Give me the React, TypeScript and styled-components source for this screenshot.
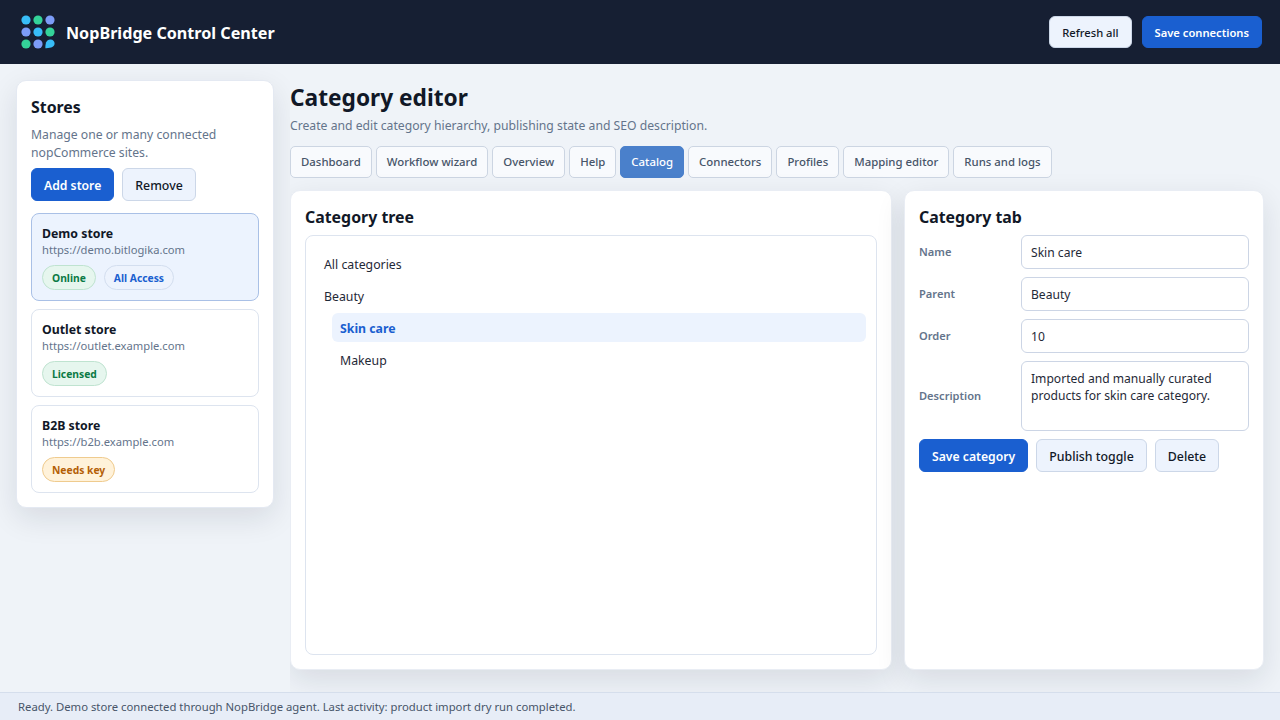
import React from 'react'
import styled, { createGlobalStyle, css } from 'styled-components'

const GlobalStyle = createGlobalStyle`
  html, body, #root {
    height: 100%;
    margin: 0;
  }
  body {
    font-family: 'Noto Sans', 'Liberation Sans', sans-serif;
    color: #111827;
    background: #eff3f8;
  }
  * {
    box-sizing: border-box;
  }
`

const tabs = ['Dashboard', 'Workflow wizard', 'Overview', 'Help', 'Catalog', 'Connectors', 'Profiles', 'Mapping editor', 'Runs and logs']

type Tone = 'green' | 'blue' | 'mint' | 'amber'

const stores: { name: string; url: string; active?: boolean; badges: { text: string; tone: Tone }[] }[] = [
  {
    name: 'Demo store',
    url: 'https://demo.bitlogika.com',
    active: true,
    badges: [
      { text: 'Online', tone: 'green' },
      { text: 'All Access', tone: 'blue' },
    ],
  },
  { name: 'Outlet store', url: 'https://outlet.example.com', badges: [{ text: 'Licensed', tone: 'mint' }] },
  { name: 'B2B store', url: 'https://b2b.example.com', badges: [{ text: 'Needs key', tone: 'amber' }] },
]

const Logo = () => (
  <svg width="34" height="34" viewBox="0 0 34 34">
    <circle cx="5" cy="5" r="4.6" fill="#38bdf8" />
    <circle cx="17" cy="5" r="4.6" fill="#34d399" />
    <circle cx="29" cy="5" r="4.6" fill="#7c9cf8" />
    <circle cx="5" cy="17" r="4.6" fill="#7c9cf8" />
    <circle cx="17" cy="17" r="4.6" fill="#38bdf8" />
    <circle cx="29" cy="17" r="4.6" fill="#34d399" />
    <circle cx="5" cy="29" r="4.6" fill="#34d399" />
    <circle cx="17" cy="29" r="4.6" fill="#7c9cf8" />
    <path d="M24.4 33.2 C24.2 29 25 24.4 29.4 24.4 C32 24.4 33.6 26.2 33.6 28.6 C33.6 31.6 30 33.4 24.4 33.2 Z" fill="#38bdf8" />
  </svg>
)

const App = () => {
  return (
    <Page>
      <GlobalStyle />
      <Header>
        <Brand>
          <Logo />
          <BrandName>NopBridge Control Center</BrandName>
        </Brand>
        <HeaderActions>
          <Button $size="small">Refresh all</Button>
          <Button $size="small" $primary>
            Save connections
          </Button>
        </HeaderActions>
      </Header>

      <Body>
        <Sidebar>
          <StoresCard>
            <CardTitle>Stores</CardTitle>
            <Hint>Manage one or many connected nopCommerce sites.</Hint>
            <ButtonRow>
              <Button $primary>Add store</Button>
              <Button>Remove</Button>
            </ButtonRow>
            <StoreList>
              {stores.map((s) => (
                <StoreItem key={s.name} $active={s.active}>
                  <StoreName>{s.name}</StoreName>
                  <StoreUrl>{s.url}</StoreUrl>
                  <Badges>
                    {s.badges.map((b) => (
                      <Badge key={b.text} $tone={b.tone}>
                        {b.text}
                      </Badge>
                    ))}
                  </Badges>
                </StoreItem>
              ))}
            </StoreList>
          </StoresCard>
        </Sidebar>

        <Main>
          <PageTitle>Category editor</PageTitle>
          <Subtitle>Create and edit category hierarchy, publishing state and SEO description.</Subtitle>
          <Tabs>
            {tabs.map((t) => (
              <Tab key={t} $active={t === 'Catalog'}>
                {t}
              </Tab>
            ))}
          </Tabs>
          <Columns>
            <Panel>
              <CardTitle>Category tree</CardTitle>
              <TreeBox>
                <TreeItem>All categories</TreeItem>
                <TreeItem>Beauty</TreeItem>
                <TreeItem $nested $selected>
                  Skin care
                </TreeItem>
                <TreeItem $nested>Makeup</TreeItem>
              </TreeBox>
            </Panel>
            <Panel>
              <CardTitle>Category tab</CardTitle>
              <Form>
                <FieldLabel>Name</FieldLabel>
                <Input defaultValue="Skin care" />
                <FieldLabel>Parent</FieldLabel>
                <Input defaultValue="Beauty" />
                <FieldLabel>Order</FieldLabel>
                <Input defaultValue="10" />
                <FieldLabel>Description</FieldLabel>
                <TextArea defaultValue="Imported and manually curated products for skin care category." />
              </Form>
              <ButtonRow>
                <Button $primary>Save category</Button>
                <Button>Publish toggle</Button>
                <Button>Delete</Button>
              </ButtonRow>
            </Panel>
          </Columns>
        </Main>
      </Body>

      <StatusBar>Ready. Demo store connected through NopBridge agent. Last activity: product import dry run completed.</StatusBar>
    </Page>
  )
}

export default App

const Page = styled.div`
  height: 720px;
  display: flex;
  flex-direction: column;
  overflow: hidden;
`

const Header = styled.header`
  height: 64px;
  flex: none;
  display: flex;
  align-items: center;
  justify-content: space-between;
  padding: 0 18px 0 21px;
  background: #161f33;
`

const Brand = styled.div`
  display: flex;
  align-items: center;
  gap: 11px;
`

const BrandName = styled.div`
  padding-top: 2px;
  font-size: 16.15px;
  font-weight: 700;
  color: #ffffff;
`

const HeaderActions = styled.div`
  display: flex;
  gap: 10px;
`

const Button = styled.button<{ $primary?: boolean; $size?: 'small' }>`
  height: 33px;
  padding: 1px 12px 0;
  border-radius: 6px;
  border: 1px solid #ccd7e8;
  background: #edf3fd;
  color: #111827;
  font-family: inherit;
  font-size: 12.35px;
  font-weight: 500;
  white-space: nowrap;
  ${(p) =>
    p.$primary &&
    css`
      border-color: #1a5fd0;
      background: #1a5fd0;
      color: #ffffff;
      font-size: 12.2px;
      font-weight: 600;
    `}
  ${(p) =>
    p.$size === 'small' &&
    css`
      height: 32px;
      padding-top: 0;
      font-size: 11.2px;
    `}
`

const Body = styled.div`
  flex: 1;
  min-height: 0;
  display: flex;
`

const Sidebar = styled.aside`
  width: 290px;
  flex: none;
  padding: 16px;
`

const StoresCard = styled.section`
  padding: 14px;
  background: #ffffff;
  border: 1px solid #e4e9f2;
  border-radius: 10px;
  box-shadow: 0 10px 30px rgba(15, 23, 42, 0.11);
`

const CardTitle = styled.h2`
  margin: 0;
  font-size: 15.9px;
  line-height: 24px;
  font-weight: 700;
  color: #111827;
`

const Hint = styled.p`
  margin: 7px 0 6px;
  font-size: 12.2px;
  line-height: 18px;
  color: #64748b;
`

const ButtonRow = styled.div`
  display: flex;
  gap: 8px;
`

const StoreList = styled.div`
  margin-top: 12px;
  display: flex;
  flex-direction: column;
  gap: 8px;
`

const StoreItem = styled.div<{ $active?: boolean }>`
  height: 88px;
  padding: 11px 10px 10px;
  border-radius: 8px;
  border: 1px solid ${(p) => (p.$active ? '#a9c0e6' : '#dde4ef')};
  background: ${(p) => (p.$active ? '#ecf3fe' : '#ffffff')};
`

const StoreName = styled.div`
  font-size: 12.3px;
  line-height: 17px;
  font-weight: 700;
  color: #111827;
`

const StoreUrl = styled.div`
  font-size: 11.2px;
  line-height: 16px;
  color: #64748b;
`

const Badges = styled.div`
  margin-top: 7px;
  display: flex;
  gap: 8px;
`

const toneStyles: Record<Tone, ReturnType<typeof css>> = {
  green: css`
    background: #e6f6ee;
    border-color: #bfe3d0;
    color: #0b7a45;
  `,
  blue: css`
    background: #edf3fd;
    border-color: #d3deef;
    color: #1a5fd0;
  `,
  mint: css`
    background: #e6f6ee;
    border-color: #bfe3d0;
    color: #0b7a45;
  `,
  amber: css`
    background: #fff2da;
    border-color: #efcb8e;
    color: #b45f06;
  `,
}

const Badge = styled.span<{ $tone: Tone }>`
  height: 25px;
  padding: 0 9px;
  display: inline-flex;
  align-items: center;
  border: 1px solid;
  border-radius: 13px;
  font-size: 10.3px;
  font-weight: 700;
  ${(p) => toneStyles[p.$tone]}
`

const Main = styled.main`
  flex: 1;
  min-width: 0;
  padding: 16px 16px 22px 0;
  display: flex;
  flex-direction: column;
  overflow: hidden;
  position: relative;
  background: #eff3f8;
`

const PageTitle = styled.h1`
  margin: 0;
  font-size: 22.7px;
  line-height: 36px;
  font-weight: 700;
  color: #111827;
`

const Subtitle = styled.p`
  margin: 1px 0 0;
  font-size: 12.2px;
  line-height: 18px;
  color: #64748b;
`

const Tabs = styled.nav`
  margin-top: 11px;
  display: flex;
  gap: 4px;
`

const Tab = styled.div<{ $active?: boolean }>`
  height: 32px;
  padding: 0 10px 1px;
  display: flex;
  align-items: center;
  border-radius: 5px;
  border: 1px solid ${(p) => (p.$active ? '#4a80cb' : '#ccd5e2')};
  background: ${(p) => (p.$active ? '#4a80cb' : '#f8fafd')};
  color: ${(p) => (p.$active ? '#ffffff' : '#475569')};
  font-size: 11.4px;
  font-weight: 500;
`

const Columns = styled.div`
  margin-top: 12px;
  flex: 1;
  min-height: 0;
  display: grid;
  grid-template-columns: 1fr 360px;
  gap: 12px;
`

const Panel = styled.section`
  padding: 14px;
  min-height: 0;
  display: flex;
  flex-direction: column;
  gap: 6px;
  background: #ffffff;
  border: 1px solid #e9edf4;
  border-radius: 10px;
  box-shadow: 0 10px 30px rgba(15, 23, 42, 0.11);
`

const TreeBox = styled.div`
  flex: 1;
  padding: 13px 10px;
  display: flex;
  flex-direction: column;
  gap: 3px;
  border: 1px solid #dde4ef;
  border-radius: 8px;
`

const TreeItem = styled.div<{ $nested?: boolean; $selected?: boolean }>`
  height: 29px;
  padding: 2px 8px 0;
  margin-left: ${(p) => (p.$nested ? '16px' : '0')};
  display: flex;
  align-items: center;
  border-radius: 6px;
  font-size: 12.3px;
  color: #1f2937;
  ${(p) =>
    p.$selected &&
    css`
      background: #ecf3fe;
      color: #1a5fd0;
      font-weight: 700;
    `}
`

const Form = styled.div`
  display: grid;
  grid-template-columns: 94px 1fr;
  column-gap: 8px;
  row-gap: 8px;
  align-items: center;
  margin-bottom: 2px;
`

const FieldLabel = styled.label`
  padding-bottom: 1px;
  font-size: 11.1px;
  font-weight: 600;
  color: #64748b;
`

const Input = styled.input`
  width: 100%;
  height: 34px;
  padding: 0 9px;
  border: 1px solid #ccd5e5;
  border-radius: 6px;
  background: #ffffff;
  color: #1f2937;
  font-family: inherit;
  font-size: 12.1px;
  outline: none;
`

const TextArea = styled.textarea`
  width: 100%;
  height: 70px;
  display: block;
  padding: 8px 9px;
  border: 1px solid #ccd5e5;
  border-radius: 6px;
  background: #ffffff;
  color: #1f2937;
  font-family: inherit;
  font-size: 12.1px;
  line-height: 17px;
  resize: none;
  outline: none;
`

const StatusBar = styled.footer`
  height: 28px;
  flex: none;
  padding: 0 18px;
  display: flex;
  align-items: center;
  background: #e7edf7;
  border-top: 1px solid #d5deec;
  color: #475569;
  font-size: 11.3px;
`
